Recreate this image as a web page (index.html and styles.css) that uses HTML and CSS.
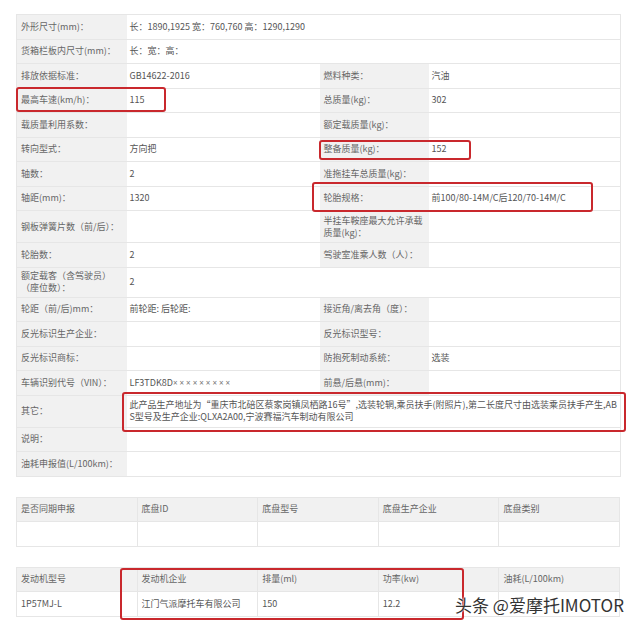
FILE: index.html
```html
<!DOCTYPE html>
<html lang="zh-CN">
<head>
    <meta charset="UTF-8">
    <meta name="viewport" content="width=device-width, initial-scale=1.0">
    <title>车型参数</title>
    <link rel="stylesheet" href="styles.css">
</head>
<body>
    <div class="page">
        <table class="spec">
            <colgroup>
                <col class="c-label"><col class="c-value"><col class="c-label2"><col class="c-value2">
            </colgroup>
            <tr><td class="lbl">外形尺寸(mm)：</td><td colspan="3">长：1890,1925 宽：760,760 高：1290,1290</td></tr>
            <tr><td class="lbl">货箱栏板内尺寸(mm)：</td><td colspan="3">长：宽：高：</td></tr>
            <tr><td class="lbl">排放依据标准：</td><td>GB14622-2016</td><td class="lbl">燃料种类：</td><td>汽油</td></tr>
            <tr><td class="lbl">最高车速(km/h)：</td><td>115</td><td class="lbl">总质量(kg)：</td><td>302</td></tr>
            <tr><td class="lbl">载质量利用系数：</td><td></td><td class="lbl">额定载质量(kg)：</td><td></td></tr>
            <tr><td class="lbl">转向型式：</td><td>方向把</td><td class="lbl">整备质量(kg)：</td><td>152</td></tr>
            <tr><td class="lbl">轴数：</td><td>2</td><td class="lbl">准拖挂车总质量(kg)：</td><td></td></tr>
            <tr><td class="lbl">轴距(mm)：</td><td>1320</td><td class="lbl">轮胎规格：</td><td>前100/80-14M/C后120/70-14M/C</td></tr>
            <tr class="tall"><td class="lbl">钢板弹簧片数（前/后）：</td><td></td><td class="lbl">半挂车鞍座最大允许承载质量(kg)：</td><td></td></tr>
            <tr><td class="lbl">轮胎数：</td><td>2</td><td class="lbl">驾驶室准乘人数（人）：</td><td></td></tr>
            <tr class="mid"><td class="lbl">额定载客（含驾驶员）（座位数）：</td><td colspan="3">2</td></tr>
            <tr><td class="lbl">轮距（前/后)mm：</td><td>前轮距: 后轮距:</td><td class="lbl">接近角/离去角（度）：</td><td></td></tr>
            <tr><td class="lbl">反光标识生产企业：</td><td></td><td class="lbl">反光标识型号：</td><td></td></tr>
            <tr><td class="lbl">反光标识商标：</td><td></td><td class="lbl">防抱死制动系统：</td><td>选装</td></tr>
            <tr><td class="lbl">车辆识别代号（VIN）：</td><td>LF3TDK8D<span class="mask">×××××××××</span></td><td class="lbl">前悬/后悬(mm)：</td><td></td></tr>
            <tr class="tall"><td class="lbl">其它：</td><td colspan="3" class="long">此产品生产地址为“重庆市北碚区蔡家岗镇凤栖路16号”,选装轮辋,乘员扶手(附照片),第二长度尺寸由选装乘员扶手产生,ABS型号及生产企业:QLXA2A00,宁波賽福汽车制动有限公司</td></tr>
            <tr><td class="lbl">说明：</td><td colspan="3"></td></tr>
            <tr><td class="lbl">油耗申报值(L/100km)：</td><td colspan="3"></td></tr>
        </table>

        <table class="grid">
            <tr class="head"><td>是否同期申报</td><td>底盘ID</td><td>底盘型号</td><td>底盘生产企业</td><td>底盘类别</td></tr>
            <tr><td></td><td></td><td></td><td></td><td></td></tr>
        </table>

        <table class="grid">
            <tr class="head"><td>发动机型号</td><td>发动机企业</td><td>排量(ml)</td><td>功率(kw)</td><td>油耗(L/100km)</td></tr>
            <tr><td>1P57MJ-L</td><td>江门气派摩托车有限公司</td><td>150</td><td>12.2</td><td></td></tr>
        </table>

        <!-- red highlight boxes -->
        <div class="mark mark-speed"></div>
        <div class="mark mark-curb"></div>
        <div class="mark mark-tire"></div>
        <div class="mark mark-other"></div>
        <div class="mark mark-engine"></div>

        <div class="watermark">头条 @爱摩托IMOTOR</div>
    </div>
</body>
</html>
```

FILE: styles.css
```css
body { margin: 0; background: #fff; font-family: "Noto Sans CJK SC", "Noto Sans", sans-serif; }
.page { position: relative; width: 604px; height: 626px; padding: 14px 0 0 16px; box-sizing: content-box; }

table { border-collapse: collapse; table-layout: fixed; width: 604px; font-size: 9px; color: #555; }
td { border: 1px solid #e6e6e6; height: 23.5px; padding: 0 3px; vertical-align: middle; line-height: 12px; }
.c-label { width: 110px; }
.c-value { width: 193px; }
.c-label2 { width: 109px; }
.c-value2 { width: 192px; }
td.lbl { background: #f1f1f1; color: #666; padding-left: 4px; }
tr.tall td { height: 31px; }
tr.mid td { height: 29px; }
td.long { word-break: break-all; padding-right: 1px; }
.mask { font-family: "Noto Sans", sans-serif; font-size: 8px; letter-spacing: 2px; color: #777; }

.spec td { border-left: none; border-right: none; }
.spec td:first-child { border-left: 1px solid #e6e6e6; }
.spec td:last-child { border-right: 1px solid #e6e6e6; }

.grid { margin-top: 20px; }
.grid td { padding-left: 4px; }
.grid tr.head td { background: #f1f1f1; color: #666; }

.mark { position: absolute; border: 2px solid #c9282d; border-radius: 3px; }
.mark-speed { left: 16px; top: 87px; width: 146px; height: 21px; }
.mark-curb { left: 319px; top: 140px; width: 148px; height: 16px; }
.mark-tire { left: 312px; top: 182px; width: 277px; height: 26px; }
.mark-other { left: 122px; top: 392px; width: 500px; height: 36px; }
.mark-engine { left: 120px; top: 568px; width: 340px; height: 48px; }

.watermark { position: absolute; left: 455px; top: 592px; font-size: 17px; white-space: nowrap; color: #333; text-shadow: 0 0 2px #fff, 0 0 2px #fff; }
```
